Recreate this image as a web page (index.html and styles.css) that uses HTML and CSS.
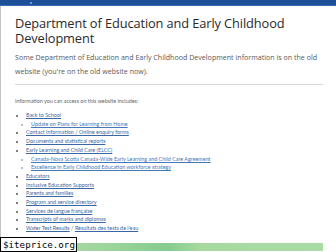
FILE: index.html
```html
<!DOCTYPE html>
<html lang="en">

    <head>
        <meta charset="UTF-8">
        <meta name="viewport" content="width=device-width, initial-scale=1.0">
        <title>Department of Education and Early Childhood Development</title>

        <link rel="stylesheet" href="styles.css">
    </head>

    <body>
        <header class="topbar"><span class="dot"></span></header>

        <div class="page">
            <main class="content">
                <h1>Department of Education and Early Childhood Development</h1>
                <p class="intro">Some Department of Education and Early Childhood Development information is on the old website (you're on the old website now).</p>
                <hr>
                <p class="lead">Information you can access on this website includes:</p>
                <ul class="links">
                    <li><a href="#">Back to School</a>
                        <ul>
                            <li><a href="#">Update on Plans for Learning from Home</a></li>
                        </ul>
                    </li>
                    <li><a href="#">Contact Information / Online enquiry forms</a></li>
                    <li><a href="#">Documents and statistical reports</a></li>
                    <li><a href="#">Early Learning and Child Care (ELCC)</a>
                        <ul>
                            <li><a href="#">Canada-Nova Scotia Canada-Wide Early Learning and Child Care Agreement</a></li>
                            <li><a href="#">Excellence in Early Childhood Education workforce strategy</a></li>
                        </ul>
                    </li>
                    <li><a href="#">Educators</a></li>
                    <li><a href="#">Inclusive Education Supports</a></li>
                    <li><a href="#">Parents and families</a></li>
                    <li><a href="#">Program and service directory</a></li>
                    <li><a href="#">Services de langue française</a></li>
                    <li><a href="#">Transcripts of marks and diplomas</a></li>
                    <li><a href="#">Water Test Results</a> / <a href="#">Résultats des tests de l'eau</a></li>
                </ul>
            </main>
            <div class="banner"></div>
        </div>

        <div class="watermark">$iteprice.org</div>
    </body>

</html>
```

FILE: styles.css
```css
* {
    box-sizing: border-box;
}

html,
body {
    margin: 0;
    padding: 0;
    width: 100%;
    height: 100%;
    background-color: #fff;
    font-family: 'Open Sans', sans-serif;
    overflow: hidden;
}

.topbar {
    height: 6px;
    background-color: #1c4e9a;
    border-bottom: 1px solid #3b6bb3;
    padding-left: 30px;
    display: flex;
    align-items: center;
}

.dot {
    width: 2px;
    height: 2px;
    border-radius: 50%;
    background-color: #8fb1e0;
}

.page {
    border-left: 1px solid #c4c4c4;
    margin-right: 13px;
    display: flex;
    flex-direction: column;
}

.content {
    padding: 0 0 0 14px;
    height: 237px;
}

h1 {
    margin: 10px 0 0;
    font-size: 12.8px;
    font-weight: 400;
    line-height: 14.5px;
    color: #2a2a2a;
    letter-spacing: -0.1px;
}

.intro {
    margin: 5px 0 0;
    font-size: 7.1px;
    line-height: 14px;
    color: #595959;
}

hr {
    margin: 6px 0 0;
    border: none;
    border-top: 1px solid #d8d8d8;
}

.lead {
    margin: 12px 0 0;
    font-family: Lato, sans-serif;
    font-size: 5.4px;
    line-height: 8px;
    color: #666;
}

.links {
    margin: 6px 0 0;
    padding-left: 11px;
    font-family: Lato, sans-serif;
    font-size: 5.4px;
    line-height: 8.7px;
    color: #555;
}

.links ul {
    margin: 0;
    padding-left: 5px;
    list-style: disc;
    color: #9ab;
}

.links a {
    color: #3a67a2;
    text-decoration: underline;
}

.links ul a {
    color: #4778b6;
}

.banner {
    height: 8px;
    background: linear-gradient(to right, #b4e0ae 0%, #9fd69c 30%, #86cc8e 52%, #a6da9f 62%, #a9dca4 100%);
}

.watermark {
    position: absolute;
    left: 0;
    bottom: 0;
    width: 77px;
    height: 15px;
    background-color: #fff;
    border: 1px solid #000;
    font-family: 'DejaVu Sans Mono', monospace;
    font-size: 9.2px;
    line-height: 13px;
    padding-left: 2px;
    color: #000;
}
```
